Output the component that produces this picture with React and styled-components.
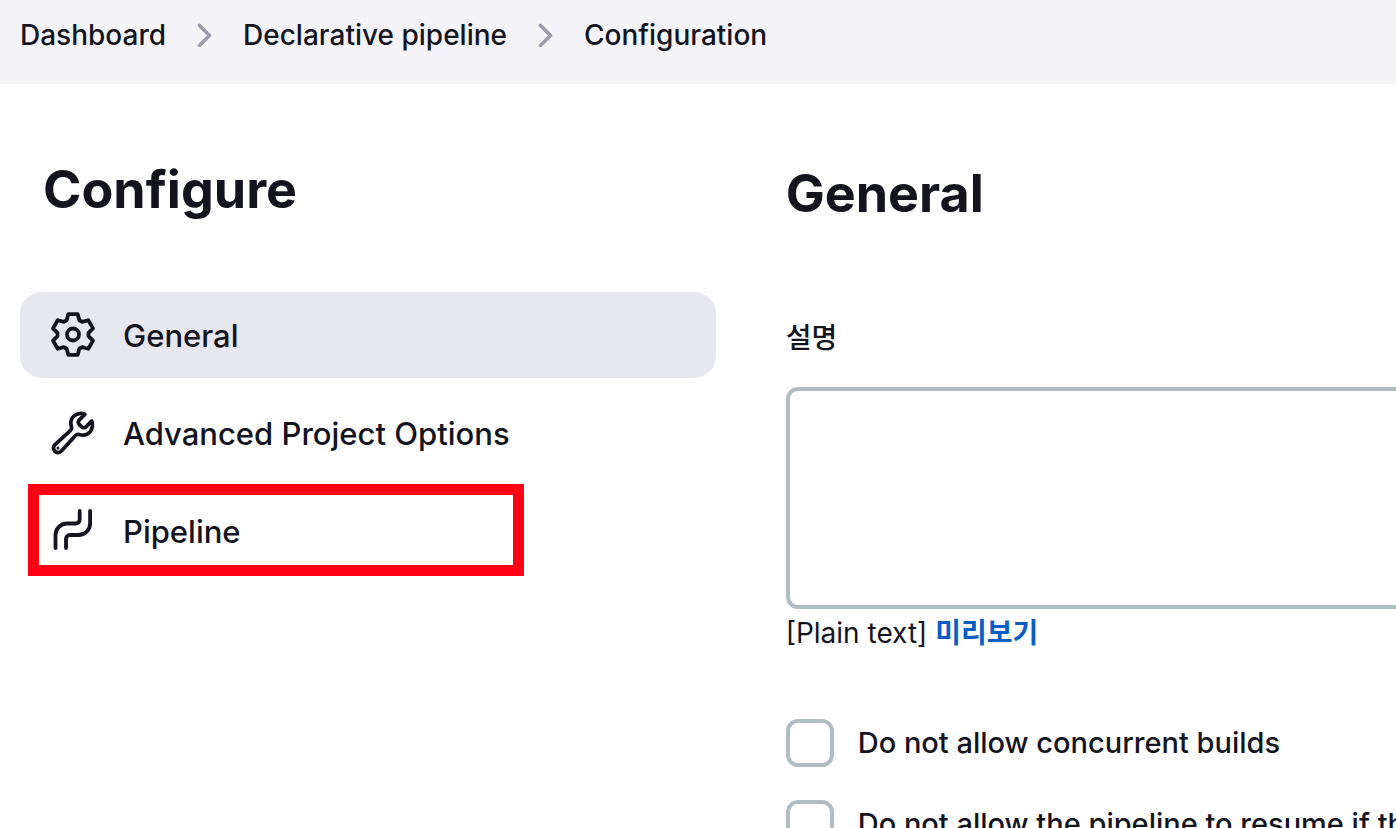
import React from 'react'
import styled, { createGlobalStyle } from 'styled-components'
import { IoBuildOutline } from 'react-icons/io5'


const GlobalStyle = createGlobalStyle`
    * {
        box-sizing: border-box;
    }
    body {
        margin: 0;
        background: #fff;
        color: #14141f;
        font-family: Inter, "Noto Sans CJK KR", sans-serif;
        font-size: 29px;
        font-weight: 500;
    }
`

const Page = styled.div`
    height: 100vh;
    overflow: hidden;
`

const Breadcrumbs = styled.nav`
    padding: 13px 20px 27px;
    background: #f3f3f8;
    font-size: 28px;
    ol {
        display: flex;
        align-items: center;
        margin: 0;
        padding: 0;
        list-style: none;
        line-height: 44px;
    }
    li {
        display: flex;
        align-items: center;
    }
    a {
        color: inherit;
        text-decoration: none;
        white-space: nowrap;
    }
`

const Separator = styled.svg`
    width: 24px;
    height: 24px;
    margin: 0 26px 0 27px;
    fill: none;
    stroke: #9b9bab;
    stroke-width: 3.6;
    stroke-linecap: round;
    stroke-linejoin: round;
`

const Layout = styled.div`
    display: grid;
    grid-template-columns: minmax(0, 1.14fr) minmax(0, 1fr);
    gap: 70px;
    padding-left: 20px;
`

const Sidebar = styled.aside`
    padding-top: 74px;
`

const Title = styled.h1`
    margin: 0 0 70px;
    padding-left: 23px;
    font-size: 52px;
    font-weight: 700;
    line-height: 64px;
`

const Tasks = styled.nav`
    display: flex;
    flex-direction: column;
    gap: 12px;
`

const Task = styled.a`
    position: relative;
    display: flex;
    align-items: center;
    gap: 26px;
    height: 86px;
    padding: 0 29px;
    border-radius: 22px;
    background: ${(props) => (props.$active ? '#e7e7f0' : 'transparent')};
    color: inherit;
    font-size: 31px;
    text-decoration: none;
    svg {
        flex: none;
        width: 48px;
        height: 48px;
    }
`

const Highlight = styled.span`
    position: absolute;
    top: -4px;
    left: 8px;
    width: 496px;
    height: 92px;
    border: 11px solid #ff0015;
    pointer-events: none;
`

const LineIcon = styled.svg`
    fill: none;
    stroke: currentColor;
    stroke-width: 3.8;
    stroke-linecap: round;
    stroke-linejoin: round;
`

const WrenchIcon = styled(IoBuildOutline)`
    path {
        stroke-width: 40;
    }
`

const Main = styled.main`
    padding-top: 78px;
`

const SectionTitle = styled.h2`
    margin: 0 0 94px;
    font-size: 52px;
    font-weight: 700;
    line-height: 64px;
`

const FieldLabel = styled.label`
    display: block;
    margin-bottom: 31px;
    font-size: 28px;
    line-height: 36px;
`

/* the box runs on past the right edge of the window */
const Description = styled.textarea`
    display: block;
    width: calc(100% + 40px);
    height: 222px;
    padding: 16px;
    border: 4px solid #b0bec3;
    border-radius: 12px;
    background: #fff;
    color: inherit;
    font: inherit;
    resize: none;
`

const Help = styled.div`
    margin: 4px 0 66px;
    font-size: 28px;
    font-weight: 400;
    line-height: 40px;
    a {
        color: #0b5fc4;
        font-weight: 700;
        text-decoration: none;
    }
`

const Option = styled.label`
    display: flex;
    align-items: center;
    gap: 24px;
    margin-bottom: 33px;
    line-height: 48px;
    white-space: nowrap;
`

const Checkbox = styled.input`
    flex: none;
    width: 48px;
    height: 48px;
    margin: 0;
    border: 4px solid #b0bec3;
    border-radius: 12px;
    background: #fff;
    appearance: none;
    &:checked {
        background: #0b5fc4;
    }
`

// six teeth, four corners each, [angle from the tooth axis, radius]
const tooth = [[-24, 15.6], [-13, 20.9], [13, 20.9], [24, 15.6]]
const gearPoints = [0, 60, 120, 180, 240, 300]
    .flatMap((axis) => tooth.map(([angle, radius]) => {
        const rad = ((axis + angle) * Math.PI) / 180
        return `${(24 + radius * Math.sin(rad)).toFixed(2)},${(23.5 - radius * Math.cos(rad)).toFixed(2)}`
    }))
    .join(' ')

const GearIcon = () => <LineIcon viewBox="0 0 48 48" aria-hidden="true">
    <polygon points={gearPoints} />
    <circle cx="24" cy="23.5" r="6" />
</LineIcon>

const PipelineIcon = () => <LineIcon viewBox="0 0 48 48" aria-hidden="true">
    <path d="M6.5 41V28a11.5 11.5 0 0 1 11.5-11.5H26.7a4 4 0 0 0 4-4V4" />
    <path d="M17 41V32a4 4 0 0 1 4-4h8.6a11.5 11.5 0 0 0 11.5-11.5V4" />
</LineIcon>

const crumbs = ['Dashboard', 'Declarative pipeline', 'Configuration']

const tasks = [
    { name: 'General', icon: <GearIcon />, active: true },
    { name: 'Advanced Project Options', icon: <WrenchIcon aria-hidden="true" /> },
    { name: 'Pipeline', icon: <PipelineIcon />, highlighted: true },
]

const options = [
    'Do not allow concurrent builds',
    'Do not allow the pipeline to resume if the controller restarts',
]

const App = () => {
    return <Page>
        <GlobalStyle />
        <Breadcrumbs aria-label="Breadcrumb">
            <ol>
                {crumbs.map((crumb, index) => <li key={crumb}>
                    {index > 0 && <Separator viewBox="0 0 24 24" aria-hidden="true">
                        <path d="M6.5 2.5l10 10l-10 10" />
                    </Separator>}
                    <a href="#">{crumb}</a>
                </li>)}
            </ol>
        </Breadcrumbs>
        <Layout>
            <Sidebar>
                <Title>Configure</Title>
                <Tasks aria-label="Configure">
                    {tasks.map((task) => <Task key={task.name} href="#" $active={task.active}>
                        {task.icon}
                        <span>{task.name}</span>
                        {task.highlighted && <Highlight />}
                    </Task>)}
                </Tasks>
            </Sidebar>
            <Main>
                <SectionTitle>General</SectionTitle>
                <FieldLabel htmlFor="description">설명</FieldLabel>
                <Description id="description" />
                <Help>[Plain text] <a href="#">미리보기</a></Help>
                {options.map((option) => <Option key={option}>
                    <Checkbox type="checkbox" />
                    <span>{option}</span>
                </Option>)}
            </Main>
        </Layout>
    </Page>
}

export default App
